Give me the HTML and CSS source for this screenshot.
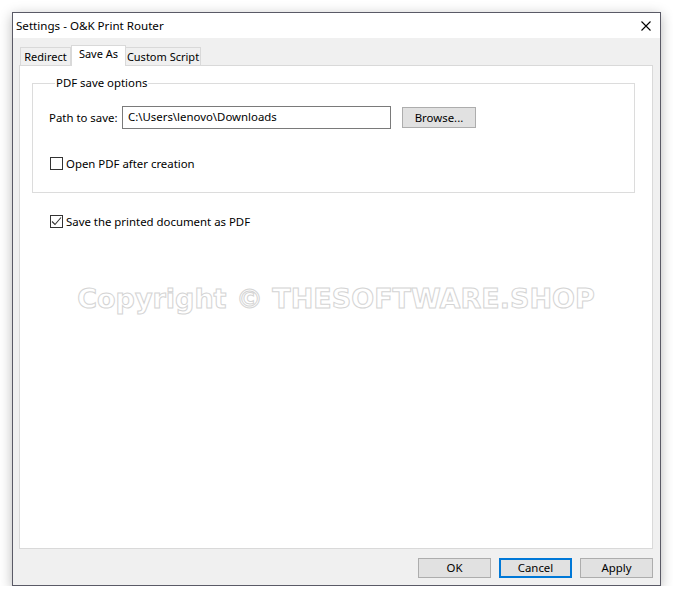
FILE: index.html
```html
<!DOCTYPE html>
<html>
<head>
<meta charset="utf-8">
<title>Settings - O&amp;K Print Router</title>
<link rel="stylesheet" href="styles.css">
</head>
<body>
<div class="window">
  <div class="titlebar">
    <span class="title">Settings - O&amp;K Print Router</span>
    <svg class="close" width="10" height="10" viewBox="0 0 10 10"><path d="M0.5 0.5 L9.5 9.5 M9.5 0.5 L0.5 9.5" stroke="#000" stroke-width="1.1" fill="none"/></svg>
  </div>
  <div class="body">
    <div class="tabs">
      <div class="tab tab-redirect">Redirect</div>
      <div class="tab active tab-saveas">Save As</div>
      <div class="tab tab-script">Custom Script</div>
    </div>
    <div class="panel">
      <fieldset class="group">
        <legend>PDF save options</legend>
        <div class="row path-row">
          <span class="label">Path to save:</span>
          <div class="input">C:\Users\lenovo\Downloads</div>
          <div class="btn browse">Browse...</div>
        </div>
        <div class="row check-row">
          <span class="checkbox"></span>
          <span>Open PDF after creation</span>
        </div>
      </fieldset>
      <div class="row check-row outer-check">
        <span class="checkbox checked"><svg width="11" height="11" viewBox="0 0 11 11"><path d="M1 5.5 L4 8.5 L10 1.5" stroke="#333" stroke-width="1.1" fill="none"/></svg></span>
        <span>Save the printed document as PDF</span>
      </div>
      <div class="watermark">Copyright © THESOFTWARE.SHOP</div>
    </div>
    <div class="footer">
      <div class="btn">OK</div>
      <div class="btn default">Cancel</div>
      <div class="btn">Apply</div>
    </div>
  </div>
</div>
</body>
</html>
```
FILE: styles.css
```css
html, body {
  margin: 0;
  padding: 0;
  background: #ffffff;
}
body {
  font-family: "Noto Sans", "DejaVu Sans", sans-serif;
  font-size: 11.4px;
  color: #000;
}
.window {
  margin: 12px 0 0 12px;
  width: 647px;
  height: 572px;
  border: 1px solid #5a5a66;
  display: flex;
  flex-direction: column;
  box-shadow: 0 3px 12px rgba(0, 0, 0, 0.28);
  background: #f0f0f0;
}
.titlebar {
  height: 25px;
  background: #ffffff;
  display: flex;
  align-items: center;
  justify-content: space-between;
  padding: 0 9px 0 3px;
}
.title {
  font-size: 11.6px;
  line-height: 16px;
}
.close {
  display: block;
}
.body {
  flex: 1;
  display: flex;
  flex-direction: column;
  padding: 7px 7px 7px 6px;
}
.tabs {
  display: flex;
  align-items: flex-end;
  height: 21px;
  padding-left: 1px;
  position: relative;
  z-index: 1;
}
.tab {
  height: 18px;
  box-sizing: border-box;
  border: 1px solid #d9d9d9;
  border-bottom: none;
  background: #f0f0f0;
  padding: 0;
  text-align: center;
  line-height: 17px;
  margin-bottom: 1px;
  font-size: 11px;
  white-space: nowrap;
}
.tab + .tab {
  border-left: none;
}
.tab-redirect {
  width: 51px;
}
.tab-saveas {
  width: 55px;
}
.tab-script {
  width: 75px;
}
.tab.active {
  height: 21px;
  background: #ffffff;
  border-left: 1px solid #d9d9d9;
  border-right: 1px solid #d9d9d9;
  margin-bottom: 0;
  line-height: 16px;
}
.tab.active + .tab {
  border-left: none;
}
.panel {
  flex: 1;
  margin-top: -1px;
  border: 1px solid #d9d9d9;
  background: #ffffff;
  padding: 9px 17px 0 12px;
  position: relative;
}
.group {
  margin: 0;
  padding: 0 0 21px 16px;
  border: 1px solid #dcdcdc;
  min-width: 0;
}
.group legend {
  padding: 0 1px;
  margin-left: 6px;
  line-height: 16px;
}
.row {
  display: flex;
  align-items: center;
}
.path-row {
  margin-top: 15px;
  height: 23px;
}
.label {
  width: 73px;
}
.input {
  width: 269px;
  height: 23px;
  box-sizing: border-box;
  border: 1px solid #7a7a7a;
  padding: 0 5px;
  line-height: 20px;
  background: #fff;
}
.btn {
  box-sizing: border-box;
  border: 1px solid #adadad;
  background: #e1e1e1;
  text-align: center;
  height: 20px;
  line-height: 18px;
  width: 73px;
}
.browse {
  margin-left: 11px;
  width: 74px;
  height: 21px;
  line-height: 19px;
}
.check-row {
  margin-top: 26px;
  height: 16px;
  gap: 3px;
  margin-left: 1px;
}
.checkbox {
  width: 13px;
  height: 13px;
  box-sizing: border-box;
  border: 1px solid #333333;
  background: #fff;
  display: flex;
  align-items: center;
  justify-content: center;
}
.outer-check {
  margin-top: 20px;
  margin-left: 18px;
}
.watermark {
  position: absolute;
  left: 0;
  right: 0;
  top: 216px;
  text-align: center;
  font-family: "DejaVu Sans", sans-serif;
  font-weight: bold;
  font-size: 27px;
  line-height: 34px;
  color: #ffffff;
  -webkit-text-stroke: 1px #d4d4d4;
  pointer-events: none;
}
.footer {
  display: flex;
  justify-content: flex-end;
  gap: 8px;
  margin-top: 9px;
}
.btn.default {
  border: 2px solid #0078d7;
  line-height: 16px;
}
```
